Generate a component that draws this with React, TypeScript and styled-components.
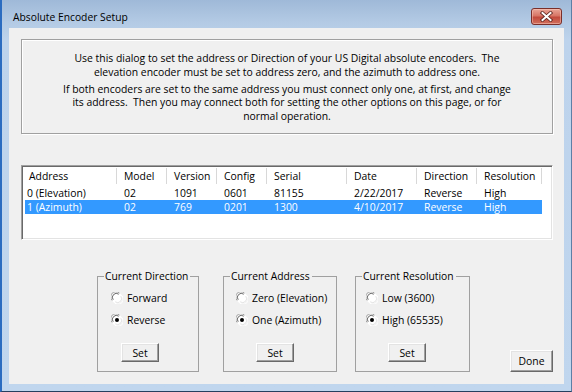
import React from "react";
import styled, { createGlobalStyle } from "styled-components";

const GlobalStyle = createGlobalStyle`
  html, body { margin: 0; padding: 0; }
  body {
    width: 572px; height: 392px; overflow: hidden;
    background: #2a5d9a;
    font-family: "Open Sans", "Noto Sans", sans-serif;
  }
  #root { width: 572px; height: 392px; }
  * { box-sizing: border-box; }
`;

const Window = styled.div`
  width: 572px;
  height: 392px;
  display: flex;
  flex-direction: column;
  border-left: 2px solid #2b6cc0;
  border-right: 1px solid #5d7fa6;
  border-bottom: 1px solid #263f5e;
  padding: 0 7px 7px 7px;
  background: linear-gradient(180deg, #9fb9d8 0px, #b3cae4 22px, #bdd3ec 40px, #c0d6ee 100%);
`;

const TitleBar = styled.div`
  height: 28px;
  display: flex;
  align-items: flex-start;
  justify-content: space-between;
`;

const Title = styled.div`
  font-size: 10.3px;
  line-height: 14px;
  color: #000;
  padding: 10px 0 0 4px;
`;

const CloseButton = styled.div`
  width: 31px;
  height: 17px;
  margin: 8px 2px 0 0;
  border: 1px solid #7a2f2a;
  border-radius: 3px;
  background: linear-gradient(180deg, #e9a597 0%, #d77565 45%, #c24a3c 55%, #d1705e 100%);
  box-shadow: inset 0 0 0 1px rgba(255, 210, 200, 0.45);
  display: flex;
  align-items: center;
  justify-content: center;
`;

const Client = styled.div`
  flex: 1;
  background: #f0f0f0;
  padding: 11px 11px 0 12px;
  display: flex;
  flex-direction: column;
  font-size: 10.4px;
  color: #000;
`;

const InfoBox = styled.div`
  width: 532px;
  height: 95px;
  border: 1px solid #a0a0a0;
  box-shadow: inset 1px 1px 0 #fff, 1px 1px 0 #fff;
  padding-top: 12px;
  text-align: center;
  line-height: 13.5px;
  white-space: pre;
`;

const Para = styled.p<{ $gap?: number }>`
  margin: ${(p) => p.$gap ?? 0}px 0 0 0;
`;

const ListView = styled.div`
  margin-top: 31px;
  width: 532px;
  height: 75px;
  background: #fff;
  border: 1px solid;
  border-color: #a0a0a0 #fff #fff #a0a0a0;
  box-shadow: inset 1px 1px 0 #696969, inset -1px -1px 0 #e3e3e3;
  padding: 1px;
  display: flex;
  flex-direction: column;
`;

const cols = "94px 50px 50px 50px 80px 70px 60px 65px 1fr";
const rowCols = "92px 50px 50px 50px 80px 70px 60px 65px";

const Header = styled.div`
  display: grid;
  grid-template-columns: ${cols};
  height: 19px;
  background: #fff;
`;

const HeaderCell = styled.div<{ $pad: number; $last?: boolean }>`
  padding-left: ${(p) => p.$pad}px;
  line-height: 19px;
  white-space: nowrap;
  background: ${(p) =>
    p.$last ? "none" : "linear-gradient(#d8d8d8, #d8d8d8) right 1px / 1px 16px no-repeat"};
`;

const Row = styled.div<{ $selected?: boolean }>`
  display: grid;
  grid-template-columns: ${rowCols};
  width: 517px;
  margin-left: 2px;
  height: 14px;
  line-height: 14px;
  background: ${(p) => (p.$selected ? "#3399ff" : "transparent")};
  color: ${(p) => (p.$selected ? "#fff" : "#000")};
`;

const Cell = styled.div<{ $pad: number }>`
  padding-left: ${(p) => p.$pad}px;
  white-space: nowrap;
`;

const BottomRow = styled.div`
  margin-top: 30px;
  padding-left: 76px;
  display: flex;
  align-items: flex-end;
`;

const Group = styled.fieldset<{ $width: number; $gapLeft: number }>`
  width: ${(p) => p.$width}px;
  height: 102px;
  margin: 0 0 0 ${(p) => p.$gapLeft}px;
  padding: 0;
  border: 1px solid #a0a0a0;
  min-width: 0;
`;

const Legend = styled.legend`
  margin-left: 6px;
  padding: 0 2px 0 1px;
  line-height: 13px;
  font-size: 10.3px;
`;

const GroupBody = styled.div<{ $radioPad: number; $buttonPad: number }>`
  display: flex;
  flex-direction: column;
  padding-top: 7px;
  padding-left: ${(p) => p.$radioPad}px;
  & > button {
    margin-left: ${(p) => p.$buttonPad - p.$radioPad}px;
  }
`;

const RadioRow = styled.label<{ $first?: boolean }>`
  display: flex;
  align-items: center;
  gap: 4px;
  height: 16px;
  margin-top: ${(p) => (p.$first ? 0 : 6)}px;
  white-space: nowrap;
`;

const Button = styled.button<{ $w: number; $h: number; $top?: number }>`
  width: ${(p) => p.$w}px;
  height: ${(p) => p.$h}px;
  margin-top: ${(p) => p.$top ?? 0}px;
  padding: 0;
  font-family: inherit;
  font-size: 10.4px;
  color: #000;
  background: #f0f0f0;
  border: 1px solid;
  border-color: #fff #696969 #696969 #fff;
  box-shadow: inset -1px -1px 0 #a0a0a0, inset 1px 1px 0 #e3e3e3;
  align-self: flex-start;
`;

const DoneButton = styled(Button)`
  margin-left: auto;
  align-self: flex-end;
`;

const Radio: React.FC<{ checked?: boolean }> = ({ checked }) => (
  <svg width="12" height="12" viewBox="0 0 12 12">
    <circle cx="6" cy="6" r="5.5" fill="#fff" />
    <path d="M1.2 8.5 A5 5 0 0 1 8.5 1.2" stroke="#a0a0a0" strokeWidth="1" fill="none" />
    <path d="M2.2 7.8 A4 4 0 0 1 7.8 2.2" stroke="#696969" strokeWidth="1" fill="none" />
    <path d="M10.8 3.5 A5 5 0 0 1 3.5 10.8" stroke="#ffffff" strokeWidth="1" fill="none" />
    <path d="M9.8 4.2 A4 4 0 0 1 4.2 9.8" stroke="#e3e3e3" strokeWidth="1" fill="none" />
    {checked && <circle cx="6" cy="6" r="2" fill="#000" />}
  </svg>
);

const CloseX = () => (
  <svg width="13" height="11" viewBox="0 0 13 11">
    <path d="M2.5 2 L10.5 9 M10.5 2 L2.5 9" stroke="#5a231d" strokeWidth="3.6" strokeLinecap="square" />
    <path d="M2.5 2 L10.5 9 M10.5 2 L2.5 9" stroke="#fff" strokeWidth="2" strokeLinecap="square" />
  </svg>
);

const headers = ["Address", "Model", "Version", "Config", "Serial", "Date", "Direction", "Resolution"];
const rows = [
  ["0 (Elevation)", "02", "1091", "0601", "81155", "2/22/2017", "Reverse", "High"],
  ["1 (Azimuth)", "02", "769", "0201", "1300", "4/10/2017", "Reverse", "High"],
];

const groups = [
  {
    title: "Current Direction",
    width: 102,
    gap: 0,
    radioPad: 13,
    buttonPad: 23,
    options: ["Forward", "Reverse"],
    checked: 1,
  },
  {
    title: "Current Address",
    width: 114,
    gap: 24,
    radioPad: 12,
    buttonPad: 32,
    options: ["Zero (Elevation)", "One (Azimuth)"],
    checked: 1,
  },
  {
    title: "Current Resolution",
    width: 115,
    gap: 18,
    radioPad: 10,
    buttonPad: 32,
    options: ["Low (3600)", "High (65535)"],
    checked: 1,
  },
];

export default function App() {
  return (
    <>
      <GlobalStyle />
      <Window>
        <TitleBar>
          <Title>Absolute Encoder Setup</Title>
          <CloseButton>
            <CloseX />
          </CloseButton>
        </TitleBar>
        <Client>
          <InfoBox>
            <Para>
              {"Use this dialog to set the address or Direction of your US Digital absolute encoders.  The\nelevation encoder must be set to address zero, and the azimuth to address one."}
            </Para>
            <Para $gap={3.5}>
              {"If both encoders are set to the same address you must connect only one, at first, and change\nits address.  Then you may connect both for setting the other options on this page, or for\nnormal operation."}
            </Para>
          </InfoBox>
          <ListView>
            <Header>
              {headers.map((h, i) => (
                <HeaderCell key={h} $pad={i === 0 ? 6 : 7}>
                  {h}
                </HeaderCell>
              ))}
              <HeaderCell $pad={0} $last />
            </Header>
            {rows.map((r, ri) => (
              <Row key={ri} $selected={ri === 1}>
                {r.map((c, ci) => (
                  <Cell key={ci} $pad={ci === 0 ? 2 : 7}>
                    {c}
                  </Cell>
                ))}
              </Row>
            ))}
          </ListView>
          <BottomRow>
            {groups.map((g) => (
              <Group key={g.title} $width={g.width} $gapLeft={g.gap}>
                <Legend>{g.title}</Legend>
                <GroupBody $radioPad={g.radioPad} $buttonPad={g.buttonPad}>
                  {g.options.map((o, oi) => (
                    <RadioRow key={o} $first={oi === 0}>
                      <Radio checked={oi === g.checked} />
                      {o}
                    </RadioRow>
                  ))}
                  <Button $w={38} $h={19} $top={15}>
                    Set
                  </Button>
                </GroupBody>
              </Group>
            ))}
            <DoneButton $w={43} $h={22}>
              Done
            </DoneButton>
          </BottomRow>
        </Client>
      </Window>
    </>
  );
}
